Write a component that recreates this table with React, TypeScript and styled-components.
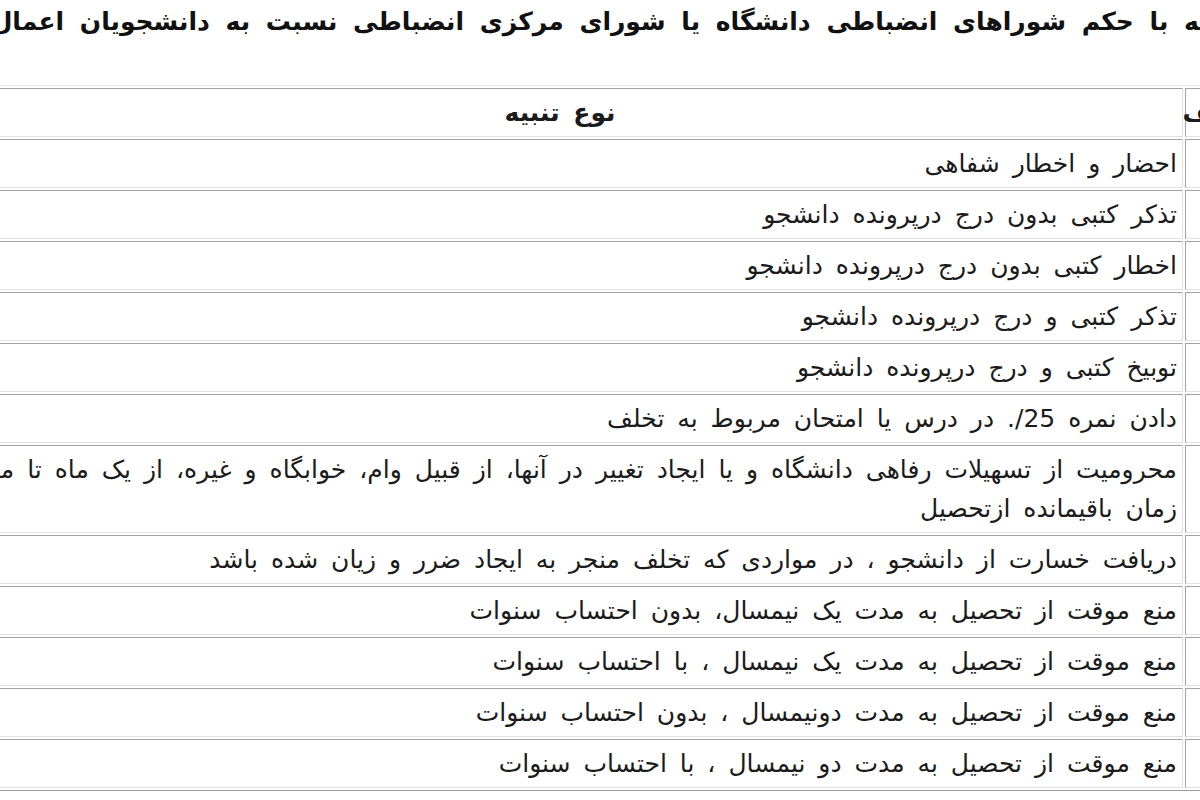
import styled, { createGlobalStyle } from "styled-components";

const GlobalStyle = createGlobalStyle`
  html, body {
    margin: 0;
    padding: 0;
    background: #ffffff;
  }
  body {
    font-family: "DejaVu Sans", "Liberation Sans", sans-serif;
    color: #161616;
  }
`;

const Page = styled.div`
  width: 1200px;
  height: 800px;
  overflow: hidden;
  direction: rtl;
  background: #ffffff;
`;

const Title = styled.h3`
  margin: 0 -130px 0 0;
  padding-top: 8px;
  white-space: nowrap;
  font-size: 25px;
  line-height: 28px;
  word-spacing: 7px;
  font-weight: bold;
  color: #111;
`;

const Table = styled.table`
  margin: 49px -58px 0 0;
  border-collapse: separate;
  border-spacing: 2px;
  border: 1px solid;
  border-color: #e6e6e6 #9c9c9c #9c9c9c #e6e6e6;
  table-layout: fixed;
  width: 1324px;
`;

const Cell = styled.td<{ $head?: boolean; $center?: boolean }>`
  border: 1px solid;
  border-color: #a3a3a3 #e2e2e2 #e2e2e2 #a3a3a3;
  padding: 4px 5px;
  font-size: 25px;
  line-height: 39px;
  word-spacing: 5px;
  font-weight: ${(p) => (p.$head ? "bold" : "normal")};
  text-align: ${(p) => (p.$center || p.$head ? "center" : "right")};
  vertical-align: middle;
  white-space: nowrap;
  color: #1b1b1b;
`;

const rows: string[][] = [
  ["احضار و اخطار شفاهی"],
  ["تذکر کتبی بدون درج درپرونده دانشجو"],
  ["اخطار کتبی بدون درج درپرونده دانشجو"],
  ["تذکر کتبی و درج درپرونده دانشجو"],
  ["توبیخ کتبی و درج درپرونده دانشجو"],
  ["دادن نمره 25/. در درس یا امتحان مربوط به تخلف"],
  [
    "محرومیت از تسهیلات رفاهی دانشگاه و یا ایجاد تغییر در آنها، از قبیل وام، خوابگاه و غیره، از یک ماه تا مدت",
    "زمان باقیمانده ازتحصیل",
  ],
  ["دریافت خسارت از دانشجو ، در مواردی که تخلف منجر به ایجاد ضرر و زیان شده باشد"],
  ["منع موقت از تحصیل به مدت یک نیمسال، بدون احتساب سنوات"],
  ["منع موقت از تحصیل به مدت یک نیمسال ، با احتساب سنوات"],
  ["منع موقت از تحصیل به مدت دونیمسال ، بدون احتساب سنوات"],
  ["منع موقت از تحصیل به مدت دو نیمسال ، با احتساب سنوات"],
];

export default function App() {
  return (
    <Page>
      <GlobalStyle />
      <Title>
        تنبیهاتی که با حکم شوراهای انضباطی دانشگاه یا شورای مرکزی انضباطی نسبت به
        دانشجویان اعمال می‌شود
      </Title>
      <Table>
        <colgroup>
          <col style={{ width: 70 }} />
          <col />
        </colgroup>
        <thead>
          <tr>
            <Cell as="th" $head>
              ردیف
            </Cell>
            <Cell as="th" $head>
              نوع تنبیه
            </Cell>
          </tr>
        </thead>
        <tbody>
          {rows.map((lines, i) => (
            <tr key={i}>
              <Cell $center>{i + 1}</Cell>
              <Cell>
                {lines.map((line, j) => (
                  <span key={j}>
                    {j > 0 && <br />}
                    {line}
                  </span>
                ))}
              </Cell>
            </tr>
          ))}
        </tbody>
      </Table>
    </Page>
  );
}
